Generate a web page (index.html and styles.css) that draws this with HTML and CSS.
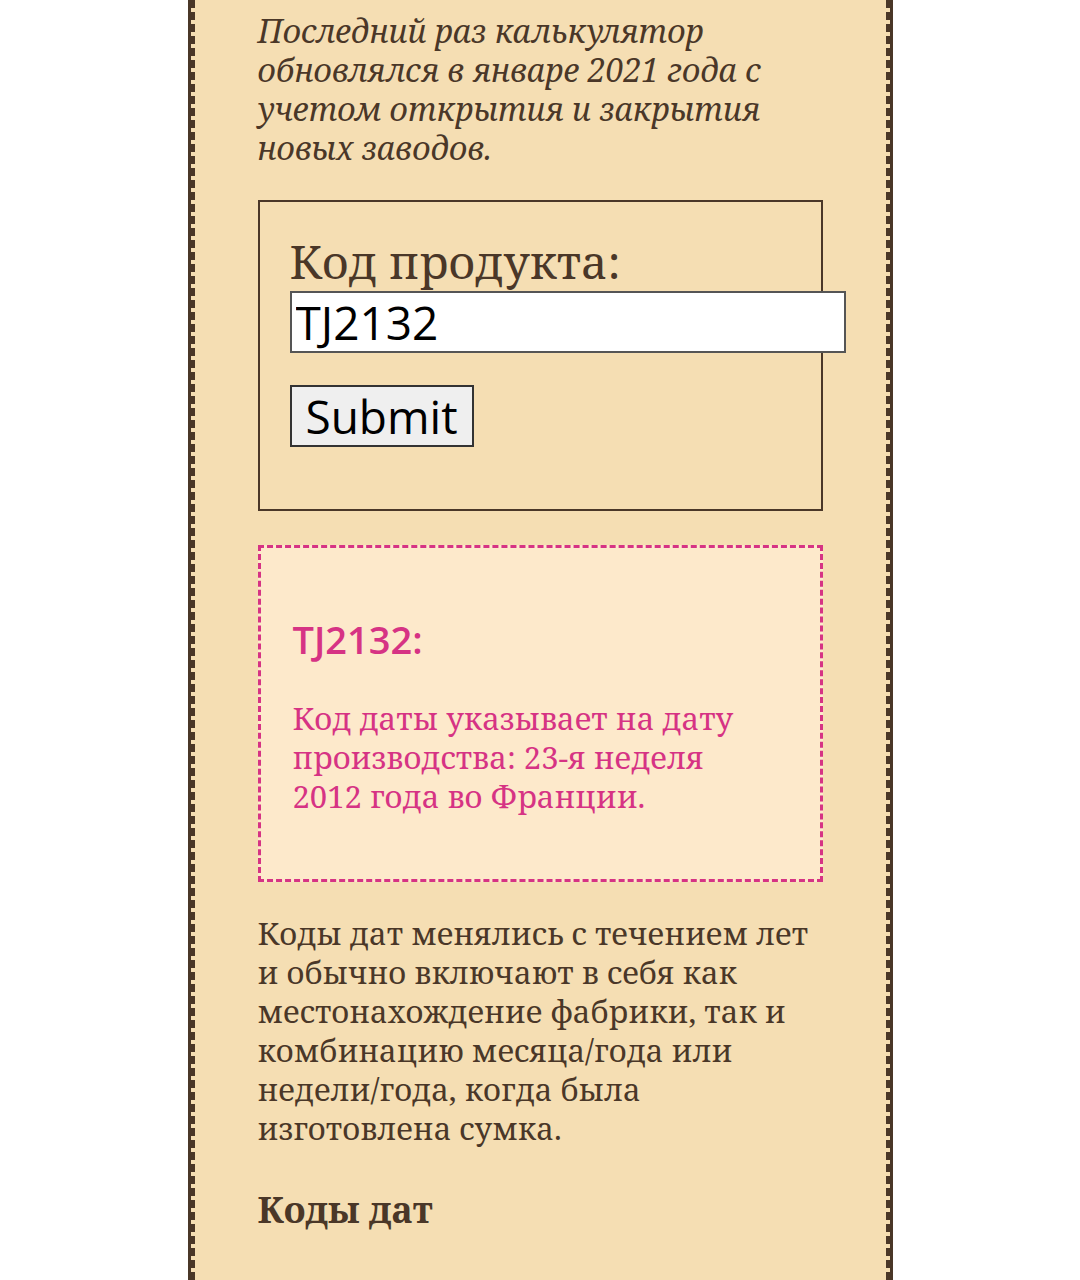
FILE: index.html
```html
<!DOCTYPE html>
<html lang="ru">
<head>
<meta charset="utf-8">
<title>Калькулятор кода даты</title>
<link rel="stylesheet" href="styles.css">
</head>
<body>
<main class="page">
  <p class="intro">Последний раз калькулятор обновлялся в январе 2021 года с учетом открытия и закрытия новых заводов.</p>
  <form class="code-form">
    <label class="code-label" for="code">Код продукта:</label>
    <input class="code-input" id="code" type="text" value="TJ2132">
    <button class="submit-btn" type="button">Submit</button>
  </form>
  <section class="result">
    <h3 class="result-title">TJ2132:</h3>
    <p class="result-text">Код даты указывает на дату производства: 23-я неделя 2012 года во Франции.</p>
  </section>
  <p class="body-text">Коды дат менялись с течением лет и обычно включают в себя как местонахождение фабрики, так и комбинацию месяца/года или недели/года, когда была изготовлена сумка.</p>
  <h2 class="section-title">Коды дат</h2>
</main>
</body>
</html>
```
FILE: styles.css
```css
html, body {
  margin: 0;
  padding: 0;
  background: #ffffff;
}
body {
  font-family: "Noto Serif", "DejaVu Serif", "Liberation Serif", serif;
  color: #4a3728;
}
.page {
  box-sizing: border-box;
  width: 699px;
  margin: 0 auto;
  min-height: 1280px;
  background: #f5deb3;
  border-left: 4px dashed #4a3728;
  border-right: 4px dashed #4a3728;
  box-shadow: -3px 0 0 #4a3728, 3px 0 0 #4a3728;
  padding: 11px 63px 40px 63px;
}
.intro {
  margin: 0 0 33px;
  font-style: italic;
  font-size: 32px;
  line-height: 39px;
}
.code-form {
  border: 2px solid #4a3728;
  padding: 33px 30px 62px;
  display: flex;
  flex-direction: column;
  align-items: flex-start;
  margin: 0 0 34px;
}
.code-label {
  font-size: 46px;
  line-height: 52px;
  margin-bottom: 4px;
}
.code-input {
  box-sizing: border-box;
  width: 556px;
  height: 62px;
  margin: 0 -24px 32px 0;
  border: 2px solid #555555;
  background: #ffffff;
  padding: 0 4px;
  font-family: "Open Sans", "Noto Sans", sans-serif;
  font-size: 46px;
  color: #000000;
}
.submit-btn {
  box-sizing: border-box;
  width: 184px;
  height: 62px;
  border: 2px solid #333333;
  background: #efefef;
  padding: 0;
  font-family: "Open Sans", "Noto Sans", sans-serif;
  font-size: 46px;
  line-height: 58px;
  color: #000000;
}
.result {
  border: 3px dashed #d63384;
  background: #fde9cb;
  padding: 32px 50px 32px 32px;
  margin: 0 0 32px;
  color: #d63384;
}
.result-title {
  margin: 35px 0 36px;
  font-family: "Open Sans", "Noto Sans", sans-serif;
  font-weight: 600;
  font-size: 38px;
  line-height: 48px;
}
.result-text {
  margin: 0 0 31px;
  font-size: 31px;
  line-height: 39px;
}
.body-text {
  margin: 0 0 40px;
  font-size: 31px;
  line-height: 39px;
}
.section-title {
  margin: 0;
  font-size: 36px;
  line-height: 44px;
  font-weight: 700;
}
```
